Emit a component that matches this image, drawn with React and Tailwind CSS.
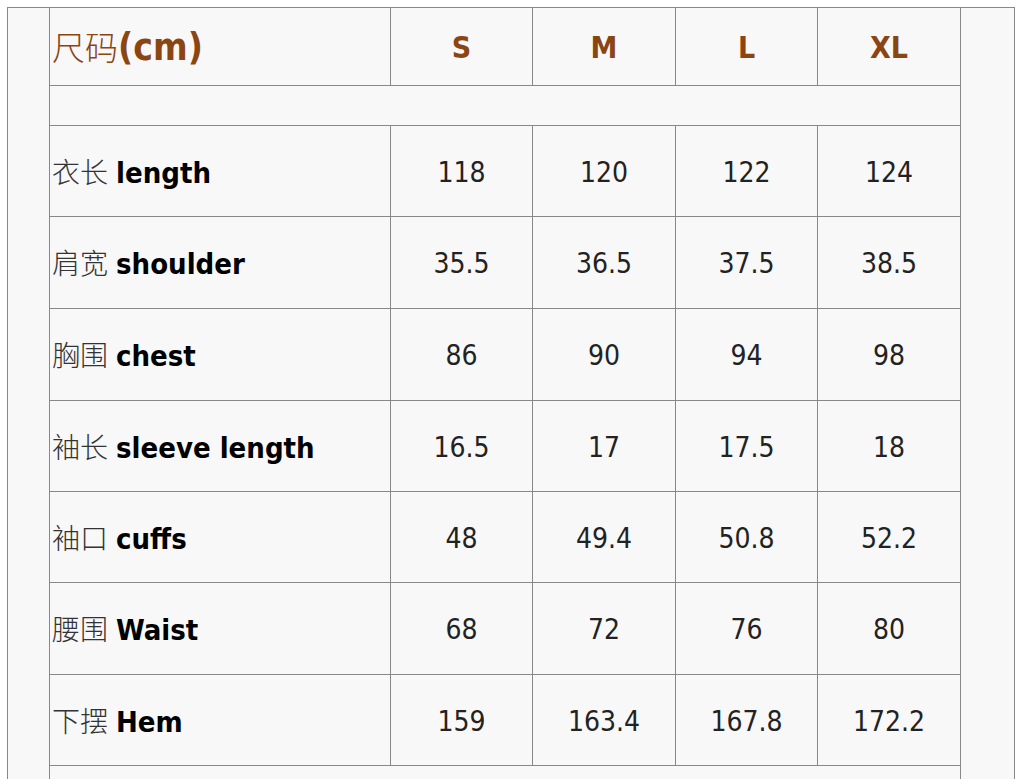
import React from "react";

const rows = [
  ["衣长", "length", ["118", "120", "122", "124"]],
  ["肩宽", "shoulder", ["35.5", "36.5", "37.5", "38.5"]],
  ["胸围", "chest", ["86", "90", "94", "98"]],
  ["袖长", "sleeve length", ["16.5", "17", "17.5", "18"]],
  ["袖口", "cuffs", ["48", "49.4", "50.8", "52.2"]],
  ["腰围", "Waist", ["68", "72", "76", "80"]],
  ["下摆", "Hem", ["159", "163.4", "167.8", "172.2"]],
];

const heights = ["h-[91px]", "h-[92px]", "h-[92px]", "h-[91px]", "h-[91px]", "h-[92px]", "h-[91px]"];

export default function App() {
  return (
    <div className="min-h-[779px] bg-white pt-[7px] pl-[7px] overflow-hidden">
      <div className="w-[1008px] h-[800px] border border-[#888] border-b-0 bg-[#f8f8f8] pl-[41px]">
        <table className="border-collapse table-fixed w-[911px] -mt-px font-['DejaVu_Sans_Condensed','DejaVu_Sans',sans-serif]">
          <colgroup>
            <col className="w-[341px]" />
            <col className="w-[142px]" />
            <col className="w-[143px]" />
            <col className="w-[142px]" />
            <col className="w-[143px]" />
          </colgroup>
          <tbody>
            <tr className="h-[78px]">
              <td className="border border-[#888] px-[2px] pt-[2px] text-left align-middle text-[#8b4513] whitespace-nowrap leading-none">
                <span className="font-['Noto_Sans_CJK_SC',sans-serif] font-light text-[33px]">尺码</span>
                <span className="font-bold text-[37px]">(cm)</span>
              </td>
              {["S", "M", "L", "XL"].map((s) => (
                <td key={s} className="border border-[#888] pt-[2px] text-center align-middle font-bold text-[30px] text-[#8b4513]">
                  {s}
                </td>
              ))}
            </tr>
            <tr className="h-[40px]">
              <td colSpan={5} className="border border-[#888]"></td>
            </tr>
            {rows.map(([zh, en, vals], i) => (
              <tr key={en} className={heights[i]}>
                <td className="border border-[#888] px-[2px] pt-[3px] text-left align-middle whitespace-nowrap">
                  <span className="font-['Noto_Sans_CJK_SC',sans-serif] font-light text-[28px] text-[#333]">{zh}</span>
                  <span className="text-[28px]"> </span>
                  <span className="font-bold text-[29px] text-black">{en}</span>
                </td>
                {vals.map((v, j) => (
                  <td key={j} className="border border-[#888] pt-[3px] text-center align-middle text-[28px] text-[#222]">
                    {v}
                  </td>
                ))}
              </tr>
            ))}
            <tr className="h-[40px]">
              <td colSpan={5} className="border border-[#888] border-b-0"></td>
            </tr>
          </tbody>
        </table>
      </div>
    </div>
  );
}
